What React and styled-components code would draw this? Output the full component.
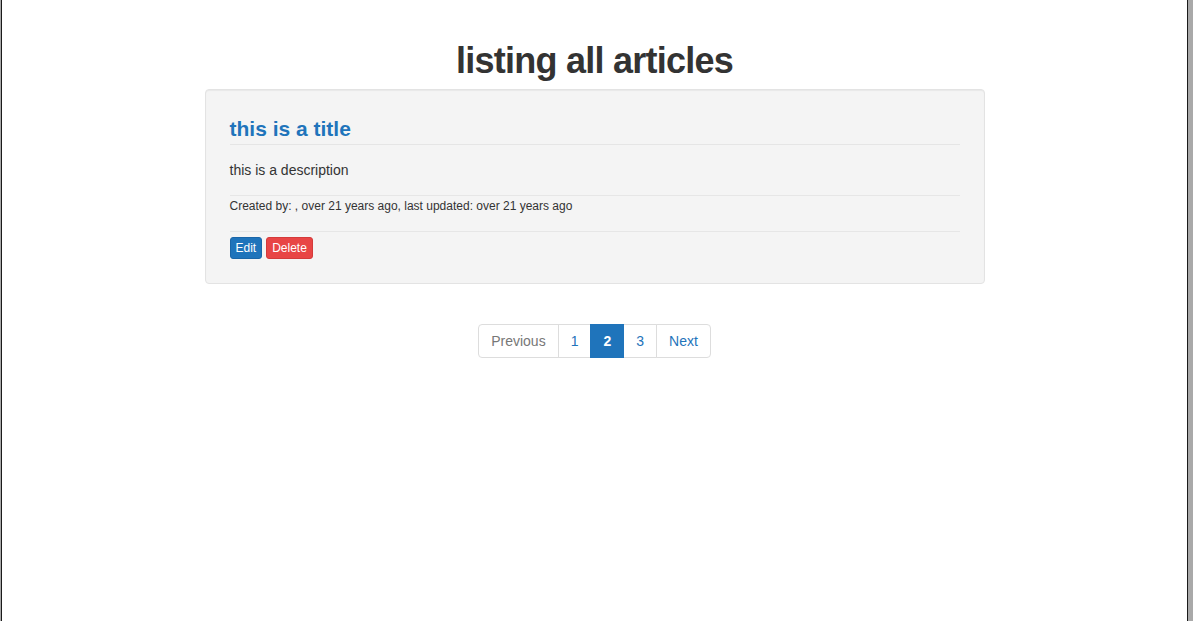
import styled, { createGlobalStyle } from "styled-components";

const GlobalStyle = createGlobalStyle`
  html, body {
    margin: 0;
    padding: 0;
    height: 100%;
    background: #a9a9a9;
  }
  body {
    font-family: "Liberation Sans", Arial, sans-serif;
    color: #333333;
  }
  #root {
    height: 100%;
  }
`;

const Frame = styled.div`
  box-sizing: border-box;
  height: 100%;
  margin: 0 5px 0 1px;
  background: #ffffff;
  border-left: 1px solid #1a1a1a;
  border-right: 1px solid #1a1a1a;
  display: flex;
  flex-direction: column;
  align-items: center;
`;

const PageTitle = styled.h1`
  margin: 41px 0 8px;
  font-size: 36px;
  line-height: 1.1;
  font-weight: 700;
  letter-spacing: -0.75px;
  color: #333333;
`;

const Well = styled.div`
  box-sizing: border-box;
  width: 780px;
  padding: 27px 24px 24px;
  background: #f4f4f4;
  border: 1px solid #e3e3e3;
  border-radius: 4px;
  box-shadow: inset 0 1px 1px rgba(0, 0, 0, 0.05);
`;

const ArticleTitle = styled.h2`
  margin: 0;
  padding-bottom: 4px;
  border-bottom: 1px solid #e5e5e5;
  font-size: 21px;
  line-height: 1.1;
  font-weight: 700;
  color: #1f74bb;
`;

const Description = styled.p`
  margin: 15px 0 15px;
  font-size: 14px;
  line-height: 20px;
`;

const Meta = styled.div`
  padding: 2px 0 16px;
  border-top: 1px solid #e6e6e6;
  border-bottom: 1px solid #e6e6e6;
  font-size: 12px;
  line-height: 17px;
`;

const Actions = styled.div`
  display: flex;
  gap: 4px;
  margin-top: 5px;
`;

const Button = styled.button`
  box-sizing: border-box;
  height: 22px;
  padding: 1px 5px;
  font-family: "Liberation Sans", Arial, sans-serif;
  font-size: 12px;
  line-height: 18px;
  color: #ffffff;
  border-radius: 3px;
  border: 1px solid ${(p) => (p.$danger ? "#d43a3a" : "#1a66a8")};
  background: ${(p) => (p.$danger ? "#e84545" : "#1f74bb")};
  cursor: pointer;
`;

const Pagination = styled.ul`
  display: flex;
  margin: 40px 0 0;
  padding: 0;
  list-style: none;
`;

const PageItem = styled.li`
  box-sizing: border-box;
  height: 34px;
  padding: 6px 12px;
  margin-left: -1px;
  font-size: 14px;
  line-height: 20px;
  border: 1px solid ${(p) => (p.$active ? "#1f74bb" : "#dddddd")};
  background: ${(p) => (p.$active ? "#1f74bb" : "#ffffff")};
  color: ${(p) => (p.$active ? "#ffffff" : p.$disabled ? "#777777" : "#1f74bb")};
  font-weight: ${(p) => (p.$active ? 700 : 400)};
  position: relative;
  z-index: ${(p) => (p.$active ? 2 : 1)};

  &:first-child {
    margin-left: 0;
    border-radius: 4px 0 0 4px;
  }
  &:last-child {
    border-radius: 0 4px 4px 0;
  }
`;

const App = () => {
  return (
    <>
      <GlobalStyle />
      <Frame>
        <PageTitle>listing all articles</PageTitle>
        <Well>
          <ArticleTitle>this is a title</ArticleTitle>
          <Description>this is a description</Description>
          <Meta>Created by: , over 21 years ago, last updated: over 21 years ago</Meta>
          <Actions>
            <Button>Edit</Button>
            <Button $danger>Delete</Button>
          </Actions>
        </Well>
        <Pagination>
          <PageItem $disabled>Previous</PageItem>
          <PageItem>1</PageItem>
          <PageItem $active>2</PageItem>
          <PageItem>3</PageItem>
          <PageItem>Next</PageItem>
        </Pagination>
      </Frame>
    </>
  );
};

export default App;
